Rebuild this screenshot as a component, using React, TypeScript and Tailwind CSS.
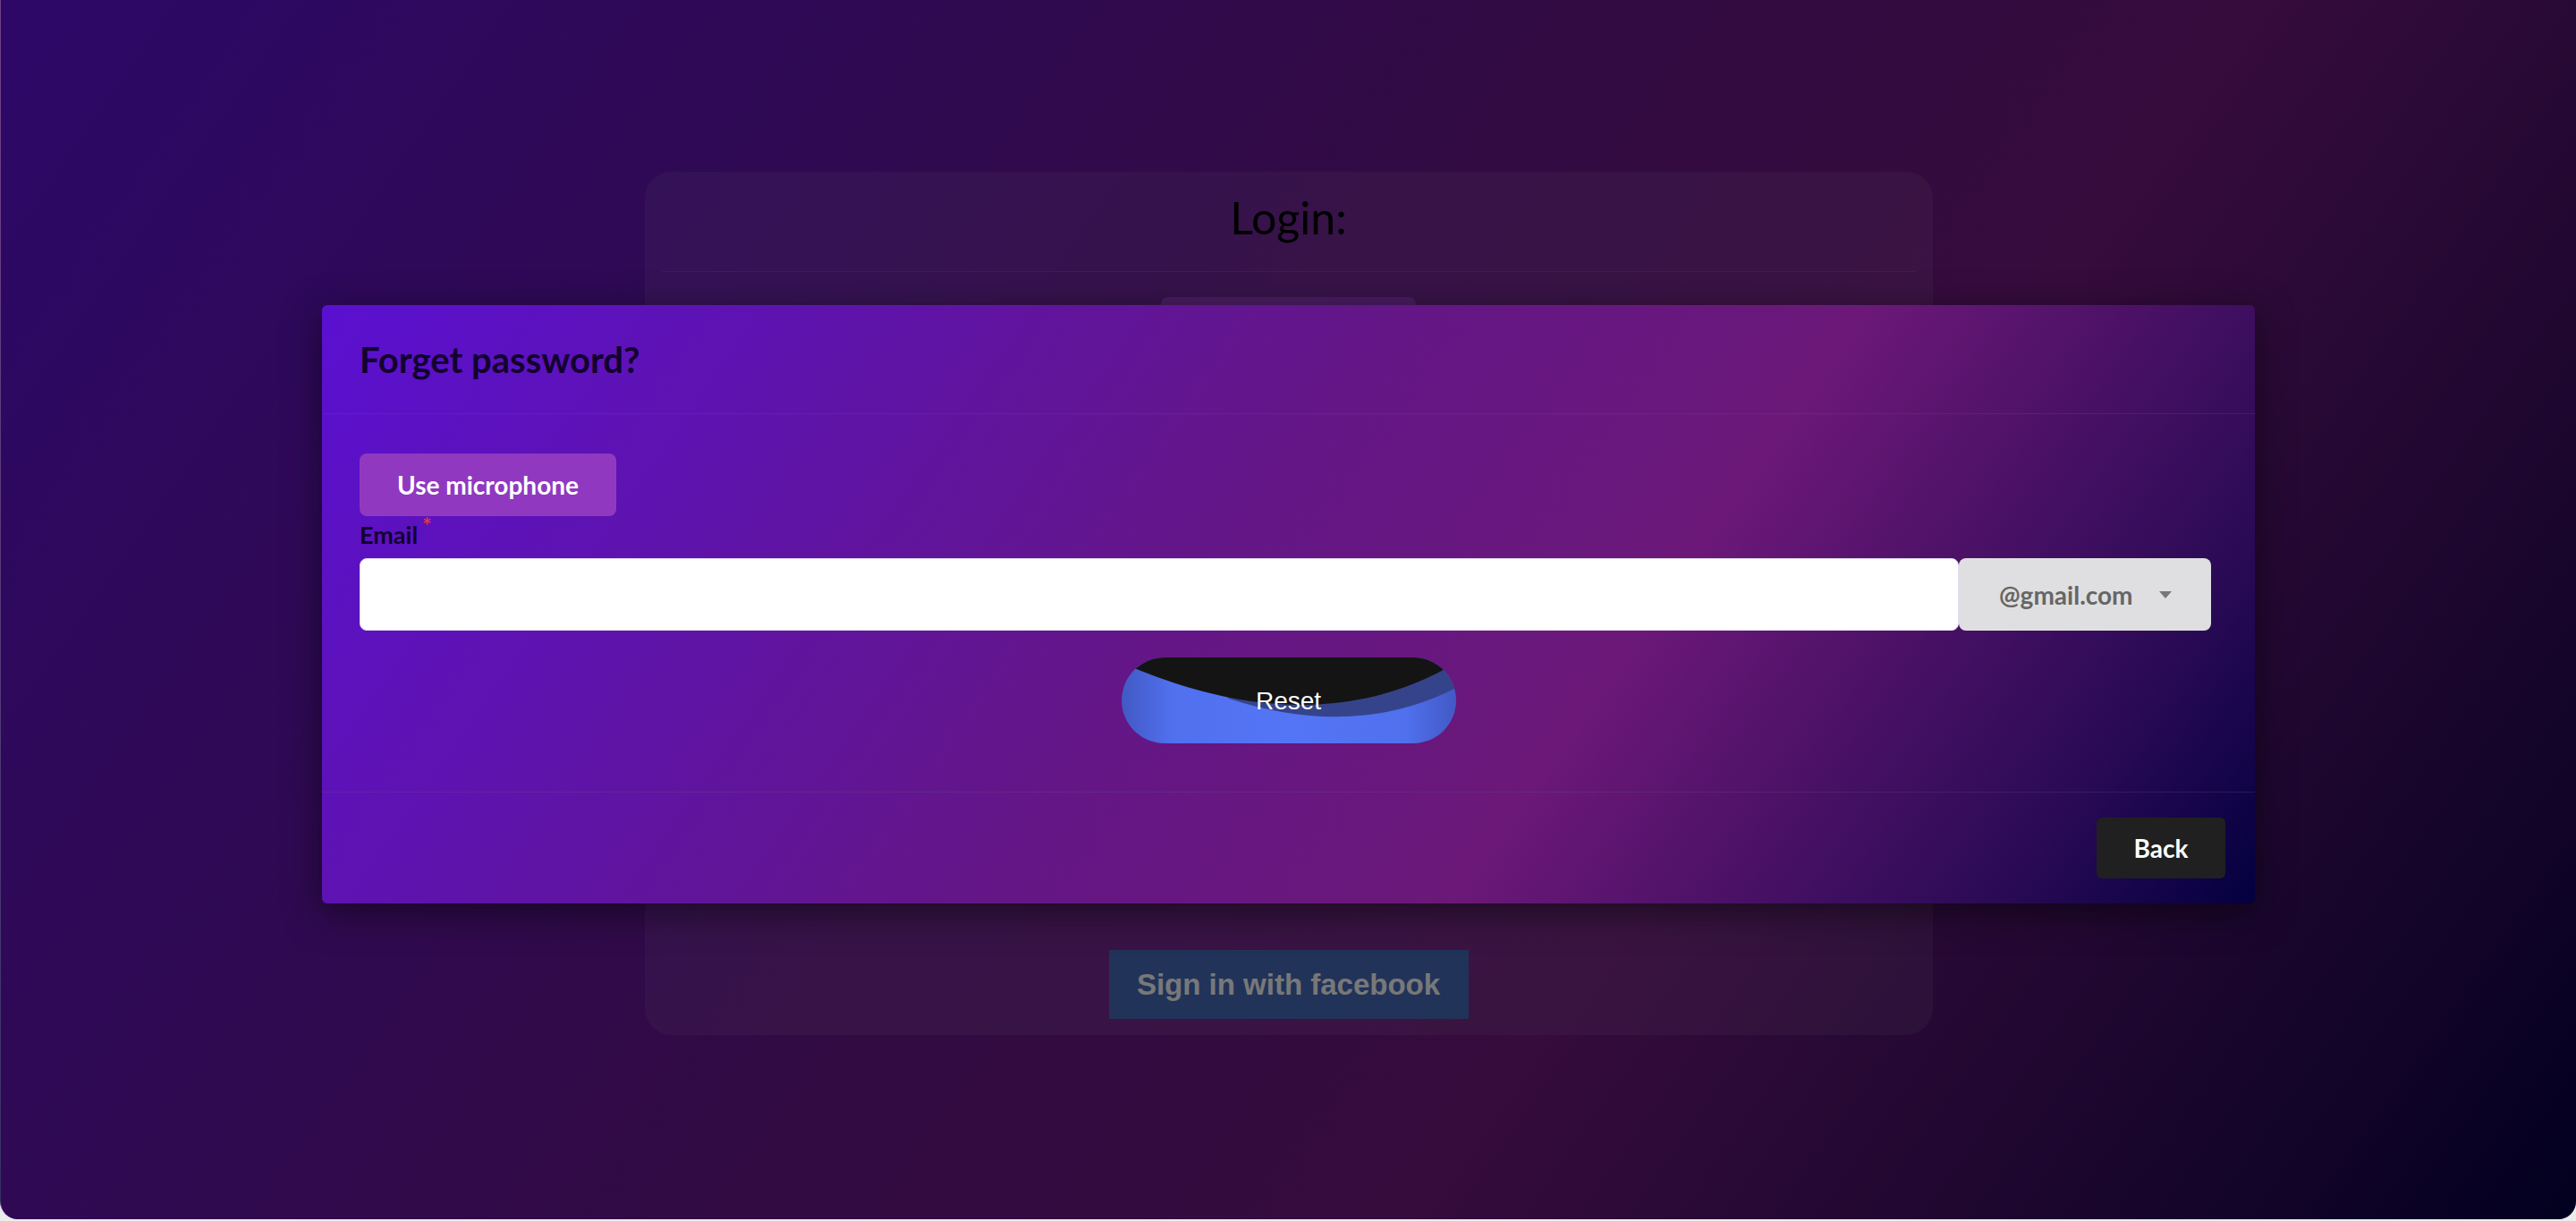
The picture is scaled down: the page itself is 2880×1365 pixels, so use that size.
function ResetButton() {
  return (
    <button className="relative h-[96px] w-[374px] self-center overflow-hidden rounded-full">
      <svg className="absolute inset-0" width="374" height="96" viewBox="0 0 374 96" aria-hidden>
        <defs>
          <linearGradient id="resetBlue" x1="0" y1="0" x2="1" y2="0">
            <stop offset="0" stopColor="#4259c4" />
            <stop offset="0.15" stopColor="#5070ee" />
            <stop offset="0.5" stopColor="#5475f6" />
            <stop offset="0.85" stopColor="#5070ee" />
            <stop offset="1" stopColor="#4259c4" />
          </linearGradient>
        </defs>
        <rect width="374" height="96" fill="url(#resetBlue)" />
        <path d="M60 0 L374 0 L374 34 Q260 92 120 46 Z" fill="#35448a" />
        <path d="M0 0 L374 0 L374 6 Q215 100 0 6 Z" fill="#141414" />
      </svg>
      <span className="relative top-[1px] font-['Liberation_Sans',Arial,sans-serif] text-[28px] leading-none text-white">
        Reset
      </span>
    </button>
  );
}

export default function App() {
  return (
    <div className="min-h-screen bg-[#ececec] font-['Lato',sans-serif]">
      <div className="relative h-[1363px] overflow-hidden rounded-b-[20px] border-l border-white/20 bg-[linear-gradient(125deg,#5a10d0_0%,#631688_44%,#6b1878_66%,#2a0a55_89%,#03003f_100%)]">
        {/* login card behind the dialog */}
        <div className="flex justify-center pt-[192px]">
          <div className="flex h-[965px] w-[1440px] flex-col rounded-[30px] bg-white/[0.07] px-[19px]">
            <div className="h-[112px] border-b border-white/10 pt-[21px] text-center text-[50px] leading-[1.2] text-black">
              Login:
            </div>
            <div className="flex flex-1 flex-col items-center pt-[28px]">
              <button className="h-[70px] w-[285px] rounded-lg bg-[#9039c0] text-[28px] font-bold text-white">
                Use microphone
              </button>
              <div className="flex-1" />
              <button className="mb-[18px] h-[77px] w-[402px] bg-[#4267b2] font-['Liberation_Sans',Arial,sans-serif] text-[33px] font-bold text-[#f0f0f0]">
                Sign in with facebook
              </button>
            </div>
          </div>
        </div>

        <div className="absolute inset-0 bg-black/50" />

        {/* dialog */}
        <div className="absolute inset-x-0 top-[341px] flex justify-center">
          <div className="flex h-[669px] w-[2161px] flex-col rounded-md bg-[linear-gradient(125deg,#5a10d0_0%,#631688_44%,#6b1878_66%,#2a0a55_89%,#03003f_100%)] shadow-[0_10px_40px_rgba(0,0,0,0.5)]">
            <div className="flex h-[122px] items-center border-b border-[rgba(100,90,130,0.25)] pl-[42px] pr-[49px]">
              <h2 className="text-[40px] font-bold leading-[1.2] text-[#12022e]">Forget password?</h2>
            </div>

            <div className="flex flex-1 flex-col pl-[42px] pr-[49px] pt-[44px]">
              <button className="h-[70px] w-[287px] rounded-lg bg-[#9039c0] text-[28px] font-bold text-white">
                Use microphone
              </button>
              <label className="mt-[5px] flex text-[27px] font-bold leading-[1.2] text-[#12022e]">
                Email
                <span className="ml-[5px] -mt-[8px] text-[24px] font-bold text-[#e53935]">*</span>
              </label>
              <div className="mt-[10px] flex h-[81px]">
                <input
                  type="email"
                  className="h-full flex-1 rounded-lg border border-[#e4dcf2] bg-white px-4 text-[26px] outline-none"
                />
                <div className="flex h-full w-[282px] items-center rounded-lg bg-[#dfdfe1] pl-[45px] pr-[44px]">
                  <span className="text-[28px] font-bold text-[#666666]">@gmail.com</span>
                  <svg className="ml-auto" width="14" height="8" viewBox="0 0 14 8" aria-hidden>
                    <path d="M0 0 H14 L7 8 Z" fill="#777777" />
                  </svg>
                </div>
              </div>
              <div className="mr-[-7px] mt-[30px] flex flex-col">
                <ResetButton />
              </div>
            </div>

            <div className="flex h-[125px] items-center justify-end border-t border-[rgba(100,90,130,0.25)] pr-[33px]">
              <button className="h-[68px] w-[144px] rounded-md bg-[#202020] text-[28px] font-bold text-white">
                Back
              </button>
            </div>
          </div>
        </div>
      </div>
    </div>
  );
}
